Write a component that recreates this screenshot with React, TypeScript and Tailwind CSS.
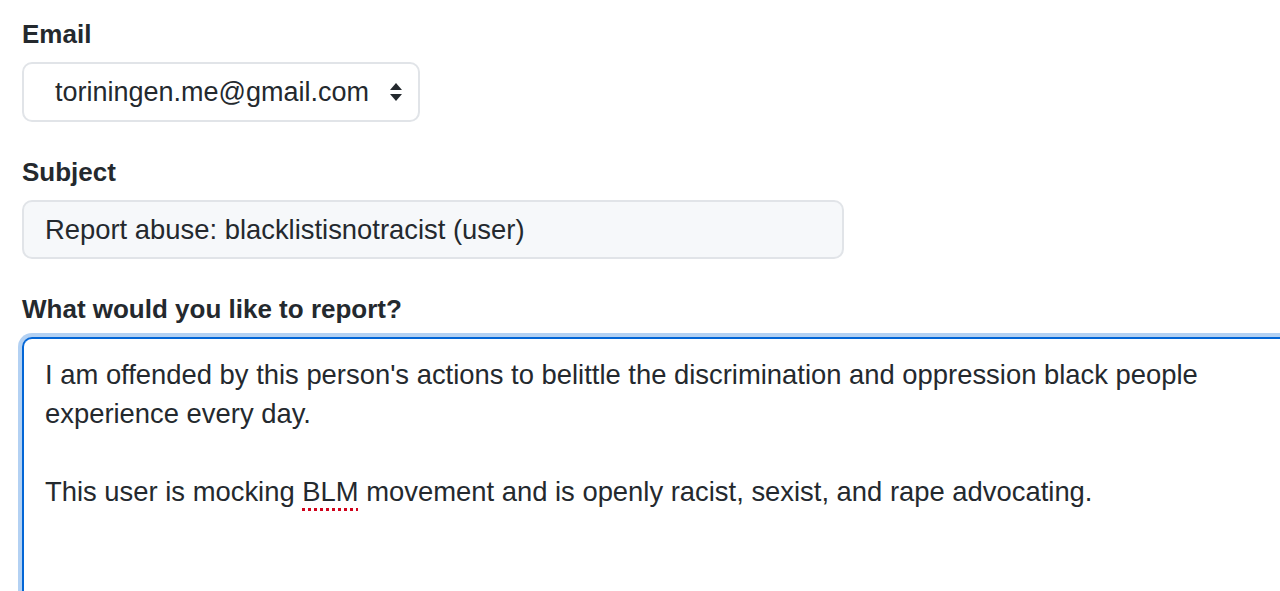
const font = { fontFamily: '"Liberation Sans", Arial, sans-serif' };

function Label({ children }: { children: React.ReactNode }) {
  return (
    <label className="block text-[26px] leading-[30px] font-bold text-[#24292e] mb-[13px]">
      {children}
    </label>
  );
}

export default function App() {
  return (
    <div className="w-[1280px] h-[591px] overflow-hidden bg-white" style={font}>
      <div className="pl-[22px] pt-[19px]">
        <Label>Email</Label>
        <div className="w-[398px] h-[60px] rounded-[10px] border-2 border-[#e1e4e8] bg-white flex items-center justify-between pl-[31px] pr-[15px]">
          <span className="text-[27px] text-[#24292e]">toriningen.me@gmail.com</span>
          <svg width="14" height="20" viewBox="0 0 14 20" className="text-[#24292e]">
            <path d="M7 1 L13 8 H1 Z" fill="currentColor" />
            <path d="M7 19 L13 12 H1 Z" fill="currentColor" />
          </svg>
        </div>

        <div className="mt-[35px]">
          <Label>Subject</Label>
          <div className="w-[822px] h-[59px] rounded-[10px] border-2 border-[#e1e4e8] bg-[#f6f8fa] flex items-center px-[21px]">
            <span className="text-[27.4px] text-[#24292e]">Report abuse: blacklistisnotracist (user)</span>
          </div>
        </div>

        <div className="mt-[35px]">
          <Label>What would you like to report?</Label>
          <div className="h-[300px] rounded-tl-[10px] border-2 border-r-0 border-[#0366d6] shadow-[0_0_0_4px_rgba(3,102,214,0.3)] bg-white pl-[21px] pt-[16px] text-[27.4px] leading-[39px] text-[#24292e] whitespace-nowrap">
            <p>
              I am offended by this person's actions to belittle the discrimination and oppression black people
              <br />
              experience every day.
            </p>
            <p className="mt-[39px]">
              This user is mocking{" "}
              <span className="underline decoration-dotted decoration-[#d0021b] decoration-[3px] underline-offset-[7px]">BLM</span>{" "}
              movement and is openly racist, sexist, and rape advocating.
            </p>
          </div>
        </div>
      </div>
    </div>
  );
}
